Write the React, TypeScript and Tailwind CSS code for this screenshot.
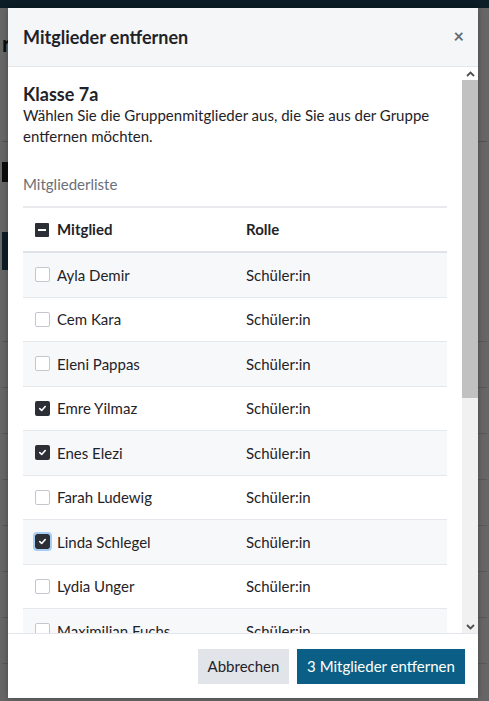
import React from "react";

const members: { name: string; checked: boolean; focus?: boolean }[] = [
  { name: "Ayla Demir", checked: false },
  { name: "Cem Kara", checked: false },
  { name: "Eleni Pappas", checked: false },
  { name: "Emre Yilmaz", checked: true },
  { name: "Enes Elezi", checked: true },
  { name: "Farah Ludewig", checked: false },
  { name: "Linda Schlegel", checked: true, focus: true },
  { name: "Lydia Unger", checked: false },
  { name: "Maximilian Fuchs", checked: false },
];

function Check({ checked, focus }: { checked: boolean; focus?: boolean }) {
  if (checked) {
    return (
      <span
        className={
          "flex h-[15px] w-[15px] shrink-0 items-center justify-center rounded-[2px] bg-[#2c2f36] " +
          (focus ? "outline outline-2 outline-[#a8cdf3]" : "")
        }
      >
        <svg width="9" height="9" viewBox="0 0 10 10">
          <path d="M2 5.2 L4.1 7.2 L8 2.8" fill="none" stroke="#fff" strokeWidth="1.8" strokeLinecap="round" strokeLinejoin="round" />
        </svg>
      </span>
    );
  }
  return <span className="block h-[15px] w-[15px] shrink-0 rounded-[2px] border border-[#c4c8ce] bg-white" />;
}

export default function App() {
  return (
    <div className="relative h-[701px] w-[489px] overflow-hidden bg-white font-['Lato',sans-serif] text-[#1f2328]">
      {/* background page */}
      <div className="h-[8px] bg-[#1e4a62]" />
      <div className="flex flex-col px-[2px] pt-[22px]">
        <div className="text-[22px] font-bold leading-[28px]">r</div>
        <div className="mt-[8px] h-[76px] border-b border-[#ccc]" />
        <div className="mt-[20px] h-[20px] w-[6px] bg-[#222]" />
        <div className="mt-[50px] h-[38px] w-[6px] bg-[#1e4a62]" />
        <div className="mt-[26px] flex flex-col">
          {Array.from({ length: 8 }).map((_, i) => (
            <div key={i} className="h-[46px] border-b border-[#ddd]" />
          ))}
        </div>
      </div>

      {/* overlay */}
      <div className="absolute inset-0 bg-black/60" />

      {/* modal */}
      <div className="absolute left-[8px] top-[8px] flex h-[690px] w-[470px] flex-col bg-white shadow-[0_0_6px_rgba(0,0,0,0.3)]">
        <div className="flex h-[59px] shrink-0 items-center justify-between border-b border-[#e3e6ea] bg-[#f5f6f8] pl-[15px] pr-[14px]">
          <h2 className="text-[18px] font-bold leading-[24px] text-[#1f2328]">Mitglieder entfernen</h2>
          <span className="pb-[3px] text-[18px] font-bold leading-none text-[#666a70]">×</span>
        </div>

        <div className="flex min-h-0 flex-1">
          <div className="min-w-0 flex-1 overflow-hidden px-[15px] pt-[16px]">
            <h3 className="text-[18px] font-bold leading-[22px]">Klasse 7a</h3>
            <p className="text-[15px] leading-[21px]">
              Wählen Sie die Gruppenmitglieder aus, die Sie aus der Gruppe entfernen möchten.
            </p>
            <div className="mt-[27px] text-[15px] leading-[21px] text-[#6b7079]">Mitgliederliste</div>
            <div className="mt-[11px] border-t-2 border-[#e8eaed]">
              <div className="flex h-[45px] items-center border-b-2 border-[#dfe2e6] pl-[12px] text-[15px] font-bold">
                <div className="flex w-[211px] items-center gap-[8px]">
                  <span className="flex h-[14px] w-[14px] items-center justify-center rounded-[1px] bg-[#2c2f36]">
                    <span className="block h-[2px] w-[8px] bg-white" />
                  </span>
                  <span>Mitglied</span>
                </div>
                <span>Rolle</span>
              </div>
              {members.map((m, i) => (
                <div
                  key={m.name}
                  className={
                    "flex h-[44.5px] items-center border-b border-[#e4e7eb] pl-[12px] text-[15px] " +
                    (i % 2 === 0 ? "bg-[#f7f8fa]" : "bg-white")
                  }
                >
                  <div className="flex w-[211px] items-center gap-[7px]">
                    <Check checked={m.checked} focus={m.focus} />
                    <span>{m.name}</span>
                  </div>
                  <span>Schüler:in</span>
                </div>
              ))}
            </div>
          </div>
          {/* scrollbar */}
          <div className="flex w-[16px] shrink-0 flex-col bg-[#f1f1f1]">
            <div className="flex h-[13px] items-center justify-center bg-white">
              <svg width="9" height="6" viewBox="0 0 9 6">
                <path d="M1 5 L4.5 1.5 L8 5" fill="none" stroke="#505050" strokeWidth="1.8" />
              </svg>
            </div>
            <div className="h-[318px] bg-[#c1c1c1]" />
            <div className="flex-1" />
            <div className="flex h-[13px] items-center justify-center">
              <svg width="9" height="6" viewBox="0 0 9 6">
                <path d="M1 1 L4.5 4.5 L8 1" fill="none" stroke="#505050" strokeWidth="1.8" />
              </svg>
            </div>
          </div>
        </div>

        <div className="flex h-[65px] shrink-0 items-center justify-end gap-[8px] border-t border-[#e3e6ea] pr-[13px]">
          <button className="h-[35px] w-[91px] bg-[#e1e4e9] text-[15px] text-[#1f2328]">Abbrechen</button>
          <button className="h-[35px] w-[168px] bg-[#0b5f86] text-[15px] text-white">3 Mitglieder entfernen</button>
        </div>
      </div>
    </div>
  );
}
